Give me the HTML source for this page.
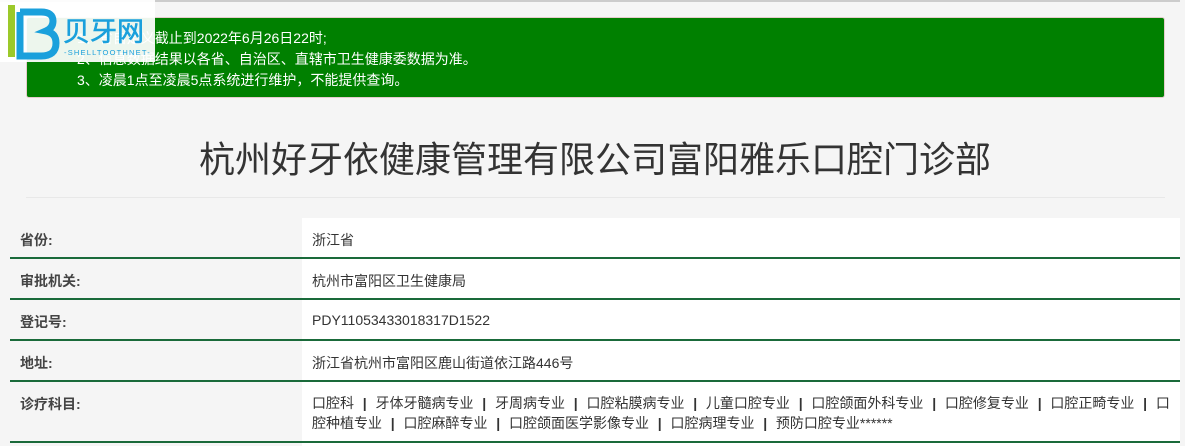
<!DOCTYPE html>
<html><head><meta charset="utf-8"><style>
*{margin:0;padding:0;box-sizing:border-box}
body{width:1185px;height:446px;background:#f5f5f5;font-family:"Liberation Sans","Noto Sans CJK SC",sans-serif;color:#333;position:relative;overflow:hidden;font-size:14px}
.top{position:absolute;left:0;top:0;width:1180px;height:2px;background:#ccc}
.alert{position:absolute;left:26px;top:17px;width:1139px;height:81px;background:#008000;border-radius:3px;border:1px solid #e5cccc;color:#fff;font-size:14px;line-height:21px;padding:10px 0 0 50px}
.logo{position:absolute;left:0;top:0;width:155px;height:62px;background:rgba(255,255,255,.93)}
h1{position:absolute;left:0;width:1190px;top:137px;text-align:center;font-weight:normal;font-size:36px;color:#333;line-height:46px}
.sep{position:absolute;left:26px;top:197px;width:1139px;height:1px;background:#e8e8e8}
.white{position:absolute;left:302px;top:218px;width:878px;height:228px;background:#fff}
.line{position:absolute;left:10px;width:1170px;height:2px;background:#1a6a3a}
.lab{position:absolute;left:20px;font-weight:bold;color:#444}
.val{position:absolute;left:312px;color:#333}
b{font-weight:bold;color:#333;margin:0 1px}
</style></head><body>
<div class="top"></div>
<div class="alert">1、省自定义截止到2022年6月26日22时;<br>2、信息数据结果以各省、自治区、直辖市卫生健康委数据为准。<br>3、凌晨1点至凌晨5点系统进行维护，不能提供查询。</div>
<div class="logo">
<svg width="155" height="62" viewBox="0 0 155 62">
<rect x="8" y="5" width="7" height="52" fill="#9cc92a"/>
<path d="M20 12 V56 H41 Q56 56 56 43 Q56 33 46 31 Q53 28 53 21 Q53 12 41 12 H20" fill="none" stroke="#1aa0dc" stroke-width="7"/>
<text x="63" y="41" font-size="27" fill="#1aa0dc" stroke="#1aa0dc" stroke-width="0.6" font-family="Noto Sans CJK SC,sans-serif">贝牙网</text>
<text x="64" y="55" font-size="7.5" fill="#1aa0dc" font-family="Liberation Sans,sans-serif" letter-spacing="1.2">-SHELLTOOTHNET-</text>
</svg>
</div>
<h1>杭州好牙依健康管理有限公司富阳雅乐口腔门诊部</h1>
<div class="sep"></div>
<div class="white"></div>
<div class="lab" style="top:230px">省份:</div><div class="val" style="top:230px">浙江省</div>
<div class="line" style="top:257px"></div>
<div class="lab" style="top:271px">审批机关:</div><div class="val" style="top:271px">杭州市富阳区卫生健康局</div>
<div class="line" style="top:298px"></div>
<div class="lab" style="top:312px">登记号:</div><div class="val" style="top:312px">PDY11053433018317D1522</div>
<div class="line" style="top:339px"></div>
<div class="lab" style="top:353px">地址:</div><div class="val" style="top:353px">浙江省杭州市富阳区鹿山街道依江路446号</div>
<div class="line" style="top:380px"></div>
<div class="lab" style="top:394px">诊疗科目:</div>
<div class="val" style="top:393px;width:860px;line-height:20px;word-break:break-all">口腔科&nbsp;&nbsp;<b>|</b>&nbsp;&nbsp;牙体牙髓病专业&nbsp;&nbsp;<b>|</b>&nbsp;&nbsp;牙周病专业&nbsp;&nbsp;<b>|</b>&nbsp;&nbsp;口腔粘膜病专业&nbsp;&nbsp;<b>|</b>&nbsp;&nbsp;儿童口腔专业&nbsp;&nbsp;<b>|</b>&nbsp;&nbsp;口腔颌面外科专业&nbsp;&nbsp;<b>|</b>&nbsp;&nbsp;口腔修复专业&nbsp;&nbsp;<b>|</b>&nbsp;&nbsp;口腔正畸专业&nbsp;&nbsp;<b>|</b>&nbsp;&nbsp;口腔种植专业&nbsp;&nbsp;<b>|</b>&nbsp;&nbsp;口腔麻醉专业&nbsp;&nbsp;<b>|</b>&nbsp;&nbsp;口腔颌面医学影像专业&nbsp;&nbsp;<b>|</b>&nbsp;&nbsp;口腔病理专业&nbsp;&nbsp;<b>|</b>&nbsp;&nbsp;预防口腔专业******</div>
<div class="line" style="top:441px"></div>
</body></html>
